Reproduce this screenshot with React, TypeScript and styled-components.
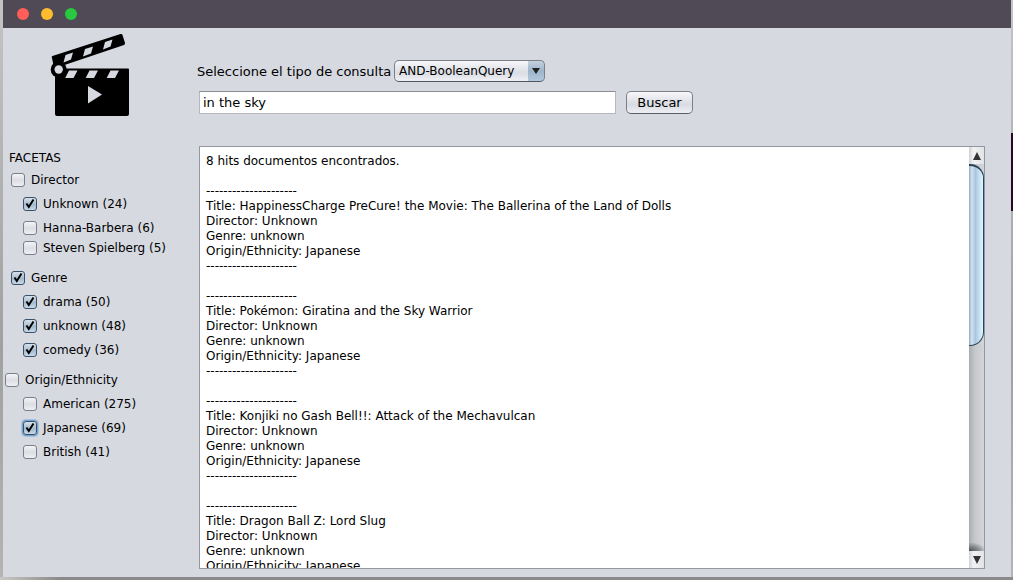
import React from "react";
import styled, { createGlobalStyle } from "styled-components";

const GlobalStyle = createGlobalStyle`
  *, *::before, *::after { box-sizing: border-box; }
  body {
    margin: 0;
    background: #d6d9e0;
    color: #000;
    font: 12px/15px "DejaVu Sans", sans-serif;
  }
  button, input, select { font: inherit; color: inherit; }
`;

const Desktop = styled.div`
  display: flex;
  height: 100vh;
  min-height: 400px;
  padding: 0 2px 3px 3px;
  background:
    linear-gradient(#2a0524, #2a0524) right 133px / 2px 78px no-repeat,
    linear-gradient(to right, #c8c8c4, #8a8a8a 60px) bottom / 100% 3px no-repeat,
    linear-gradient(#c4c4c2, #a0a09e 60%, #b4b4b0) no-repeat;
  background-position: right 0 top 133px, bottom, 0 0;
`;

const Window = styled.div`
  flex: 1;
  min-width: 0;
  display: flex;
  flex-direction: column;
  background: #d6d9e0;
`;

const TitleBar = styled.header`
  flex: none;
  display: flex;
  align-items: center;
  gap: 12px;
  height: 28px;
  padding-left: 14px;
  background: #504956;
`;

const WindowButton = styled.button<{ $color: string }>`
  width: 12px;
  height: 12px;
  padding: 0;
  border: 0;
  border-radius: 50%;
  background: ${(p) => p.$color};
`;

const Content = styled.div`
  flex: 1;
  min-height: 0;
  display: grid;
  grid-template-columns: 196px minmax(0, 1fr);
  grid-template-rows: 118px minmax(0, 1fr);
  padding: 0 26px 8px 0;
`;

const Logo = styled.svg`
  width: 80px;
  height: 84px;
  margin: 5px 0 0 47px;
`;

const Search = styled.form`
  display: flex;
  flex-direction: column;
  gap: 9px;
  padding-top: 32px;
`;

const Line = styled.div`
  display: flex;
  align-items: center;
`;

const QueryLabel = styled.label`
  width: 197px;
  margin-left: -2px;
  font-size: 13px;
  white-space: nowrap;
`;

const SelectBox = styled.div`
  position: relative;
  width: 151px;
  height: 22px;
`;

const Select = styled.select`
  appearance: none;
  width: 100%;
  height: 100%;
  padding: 0 18px 0 4px;
  border: 1px solid #7b8088;
  border-bottom-color: #50565e;
  border-radius: 5px;
  background:
    linear-gradient(#c3d2df, #9db5c9 50%, #b3cade) right / 16px 100% no-repeat,
    linear-gradient(#f7f7f9, #dfe1e7 50%, #dadde4 60%, #eff1f6);
`;

const SelectArrow = styled.svg`
  position: absolute;
  top: 8px;
  right: 5px;
  width: 8px;
  height: 6px;
  pointer-events: none;
`;

const QueryInput = styled.input`
  width: 417px;
  height: 23px;
  padding: 0 3px;
  border: 1px solid #b6b8bd;
  border-top-color: #8b8d92;
  border-radius: 0;
  background: #fff;
  font-size: 13px;
  outline: none;
`;

const SearchButton = styled.button`
  width: 67px;
  height: 23px;
  margin-left: 10px;
  padding: 0;
  border: 1px solid #7b8088;
  border-bottom-color: #585d65;
  border-radius: 5px;
  background: linear-gradient(#f9f9fb, #dddfe6 50%, #d8dbe2 60%, #eef0f5);
  font-size: 13px;
`;

const Sidebar = styled.aside`
  padding: 5px 0 0 2px;
`;

const SidebarTitle = styled.h2`
  margin: 0 0 4px 4px;
  font-size: 12px;
  line-height: 15px;
  font-weight: 400;
`;

const Group = styled.div`
  margin-bottom: 10px;
`;

const Facet = styled.label<{ $indent: number; $tight?: boolean }>`
  display: flex;
  align-items: center;
  gap: 6px;
  height: 20px;
  margin-top: ${(p) => (p.$tight ? 0 : 4)}px;
  padding-left: ${(p) => p.$indent}px;
  line-height: 16px;
  white-space: nowrap;
  &:first-child { margin-top: 0; }
`;

const CheckBox = styled.input<{ $focused?: boolean }>`
  appearance: none;
  flex: none;
  width: 14px;
  height: 14px;
  margin: 0;
  border: 1px solid #7c7f87;
  border-radius: 3px;
  background: linear-gradient(#f4f4f7, #dcdee4 50%, #eeeff3);
  ${(p) => p.$focused && "box-shadow: 0 0 0 1px #73a4d1, 0 0 0 2px #a3c2df;"}
  &:checked {
    border-color: #3c5167;
    background:
      url("data:image/svg+xml,%3Csvg xmlns='http://www.w3.org/2000/svg' viewBox='0 0 12 12'%3E%3Cpath d='M2.500 5.500 L4.800 9 L9.500 1.500' fill='none' stroke='black' stroke-width='2'/%3E%3C/svg%3E") center / 12px 12px no-repeat,
      linear-gradient(#d5e0ea, #a5bbce 55%, #c6d9e9);
  }
`;

const Results = styled.main`
  display: grid;
  grid-template-columns: minmax(0, 1fr) 15px;
  border: 1px solid #9297a1;
  background: #fff;
  min-height: 0;
`;

const ResultText = styled.div`
  overflow: hidden;
  padding: 7px 6px;
`;

const Summary = styled.p`
  margin: 0 0 15px;
`;

const Movie = styled.article`
  margin-bottom: 15px;
`;

const Field = styled.div`
  white-space: nowrap;
`;

const ScrollBar = styled.div`
  display: flex;
  flex-direction: column;
  min-height: 0;
  background: linear-gradient(to right, #a9acb1, #c6c8cc 40%, #d3d5d9);
`;

const ScrollButton = styled.button`
  flex: none;
  display: grid;
  place-items: center;
  height: 17px;
  padding: 0;
  border: 0;
  background: linear-gradient(to right, #cfd1d5, #f1f2f4 30%, #e1e3e6);
`;

const Track = styled.div`
  flex: 1;
  min-height: 0;
  background: radial-gradient(ellipse at 0 100%, #4a4c50, #8e9196 50%, transparent 80%) bottom / 100% 8px no-repeat;
`;

const Thumb = styled.div`
  height: 47%;
  border: 1px solid #294456;
  border-top-width: 2px;
  border-left: 0;
  border-radius: 0 14px 14px 0;
  background: linear-gradient(to right, #8fabc4, #d5e3ef 20%, #a8c5de 45%, #b9d5ea 60%, #e2f6ff);
`;

type Item = { name: string; checked: boolean; tight?: boolean; focused?: boolean };

const groups: { name: string; indent: number; checked: boolean; items: Item[] }[] = [
  {
    name: "Director",
    indent: 6,
    checked: false,
    items: [
      { name: "Unknown (24)", checked: true },
      { name: "Hanna-Barbera (6)", checked: false },
      { name: "Steven Spielberg (5)", checked: false, tight: true },
    ],
  },
  {
    name: "Genre",
    indent: 6,
    checked: true,
    items: [
      { name: "drama (50)", checked: true },
      { name: "unknown (48)", checked: true },
      { name: "comedy (36)", checked: true },
    ],
  },
  {
    name: "Origin/Ethnicity",
    indent: 0,
    checked: false,
    items: [
      { name: "American (275)", checked: false },
      { name: "Japanese (69)", checked: true, focused: true },
      { name: "British (41)", checked: false },
    ],
  },
];

const titles = [
  "HappinessCharge PreCure! the Movie: The Ballerina of the Land of Dolls",
  "Pokémon: Giratina and the Sky Warrior",
  "Konjiki no Gash Bell!!: Attack of the Mechavulcan",
  "Dragon Ball Z: Lord Slug",
];

const dashes = "-".repeat(21);

export default function App() {
  return (
    <Desktop>
      <GlobalStyle />
      <Window>
        <TitleBar>
          <WindowButton $color="#ff5f57" aria-label="Cerrar" />
          <WindowButton $color="#febc2e" aria-label="Minimizar" />
          <WindowButton $color="#28c840" aria-label="Maximizar" />
        </TitleBar>
        <Content>
          <Logo viewBox="0 0 80 84" aria-hidden="true">
            <path d="M4 35.500H78Q79 35.500 79 36.500V81Q79 83 77 83H7Q5 83 5 81V38Z" />
            <path d="M2 25Q1 23.500 2.500 23L70.500 1Q72 .5 72.500 2L75 10Q75 11.500 74 12L16 31.500L4 35Z" />
            <circle cx="8.700" cy="36.500" r="8" />
            <g fill="#d6d9e0">
              <circle cx="8.700" cy="36.500" r="4.200" />
              <path d="M19 37.500H27.500L23.500 45H15.200Z M39.500 37.500H48L44 45H35.700Z M60.500 37.500H69L65 45H56.700Z" />
              <path d="M15.500 22L23 19.500L21 26.500L13.500 29.500Z M35 16L43 13.500L41 20.500L33 23.500Z M55 9L62.500 6.500L60.500 13.500L53 16.500Z" />
              <path d="M38 53V70.500L52 61.500Z" />
            </g>
          </Logo>
          <Search onSubmit={(e) => e.preventDefault()}>
            <Line>
              <QueryLabel htmlFor="kind">Seleccione el tipo de consulta</QueryLabel>
              <SelectBox>
                <Select id="kind">
                  <option>AND-BooleanQuery</option>
                </Select>
                <SelectArrow viewBox="0 0 8 6" aria-hidden="true">
                  <path d="M0 0H8L4 6Z" fill="#222" />
                </SelectArrow>
              </SelectBox>
            </Line>
            <Line>
              <QueryInput aria-label="Consulta" defaultValue="in the sky" />
              <SearchButton type="submit">Buscar</SearchButton>
            </Line>
          </Search>
          <Sidebar>
            <SidebarTitle>FACETAS</SidebarTitle>
            {groups.map((g) => (
              <Group key={g.name}>
                <Facet $indent={g.indent}>
                  <CheckBox type="checkbox" defaultChecked={g.checked} />
                  {g.name}
                </Facet>
                {g.items.map((item) => (
                  <Facet key={item.name} $indent={18} $tight={item.tight}>
                    <CheckBox type="checkbox" defaultChecked={item.checked} $focused={item.focused} />
                    {item.name}
                  </Facet>
                ))}
              </Group>
            ))}
          </Sidebar>
          <Results>
            <ResultText>
              <Summary>8 hits documentos encontrados.</Summary>
              {titles.map((title, i) => (
                <Movie key={title}>
                  <Field>{dashes}</Field>
                  <Field>Title: {title}</Field>
                  <Field>Director: Unknown</Field>
                  <Field>Genre: unknown</Field>
                  <Field>Origin/Ethnicity: Japanese</Field>
                  {i < titles.length - 1 && <Field>{dashes}</Field>}
                </Movie>
              ))}
            </ResultText>
            <ScrollBar>
              <ScrollButton aria-label="Subir">
                <svg width="8" height="8" viewBox="0 0 8 8"><path d="M0 8L4 0L8 8Z" fill="#333" /></svg>
              </ScrollButton>
              <Track>
                <Thumb />
              </Track>
              <ScrollButton aria-label="Bajar">
                <svg width="8" height="8" viewBox="0 0 8 8"><path d="M0 0H8L4 8Z" fill="#333" /></svg>
              </ScrollButton>
            </ScrollBar>
          </Results>
        </Content>
      </Window>
    </Desktop>
  );
}
